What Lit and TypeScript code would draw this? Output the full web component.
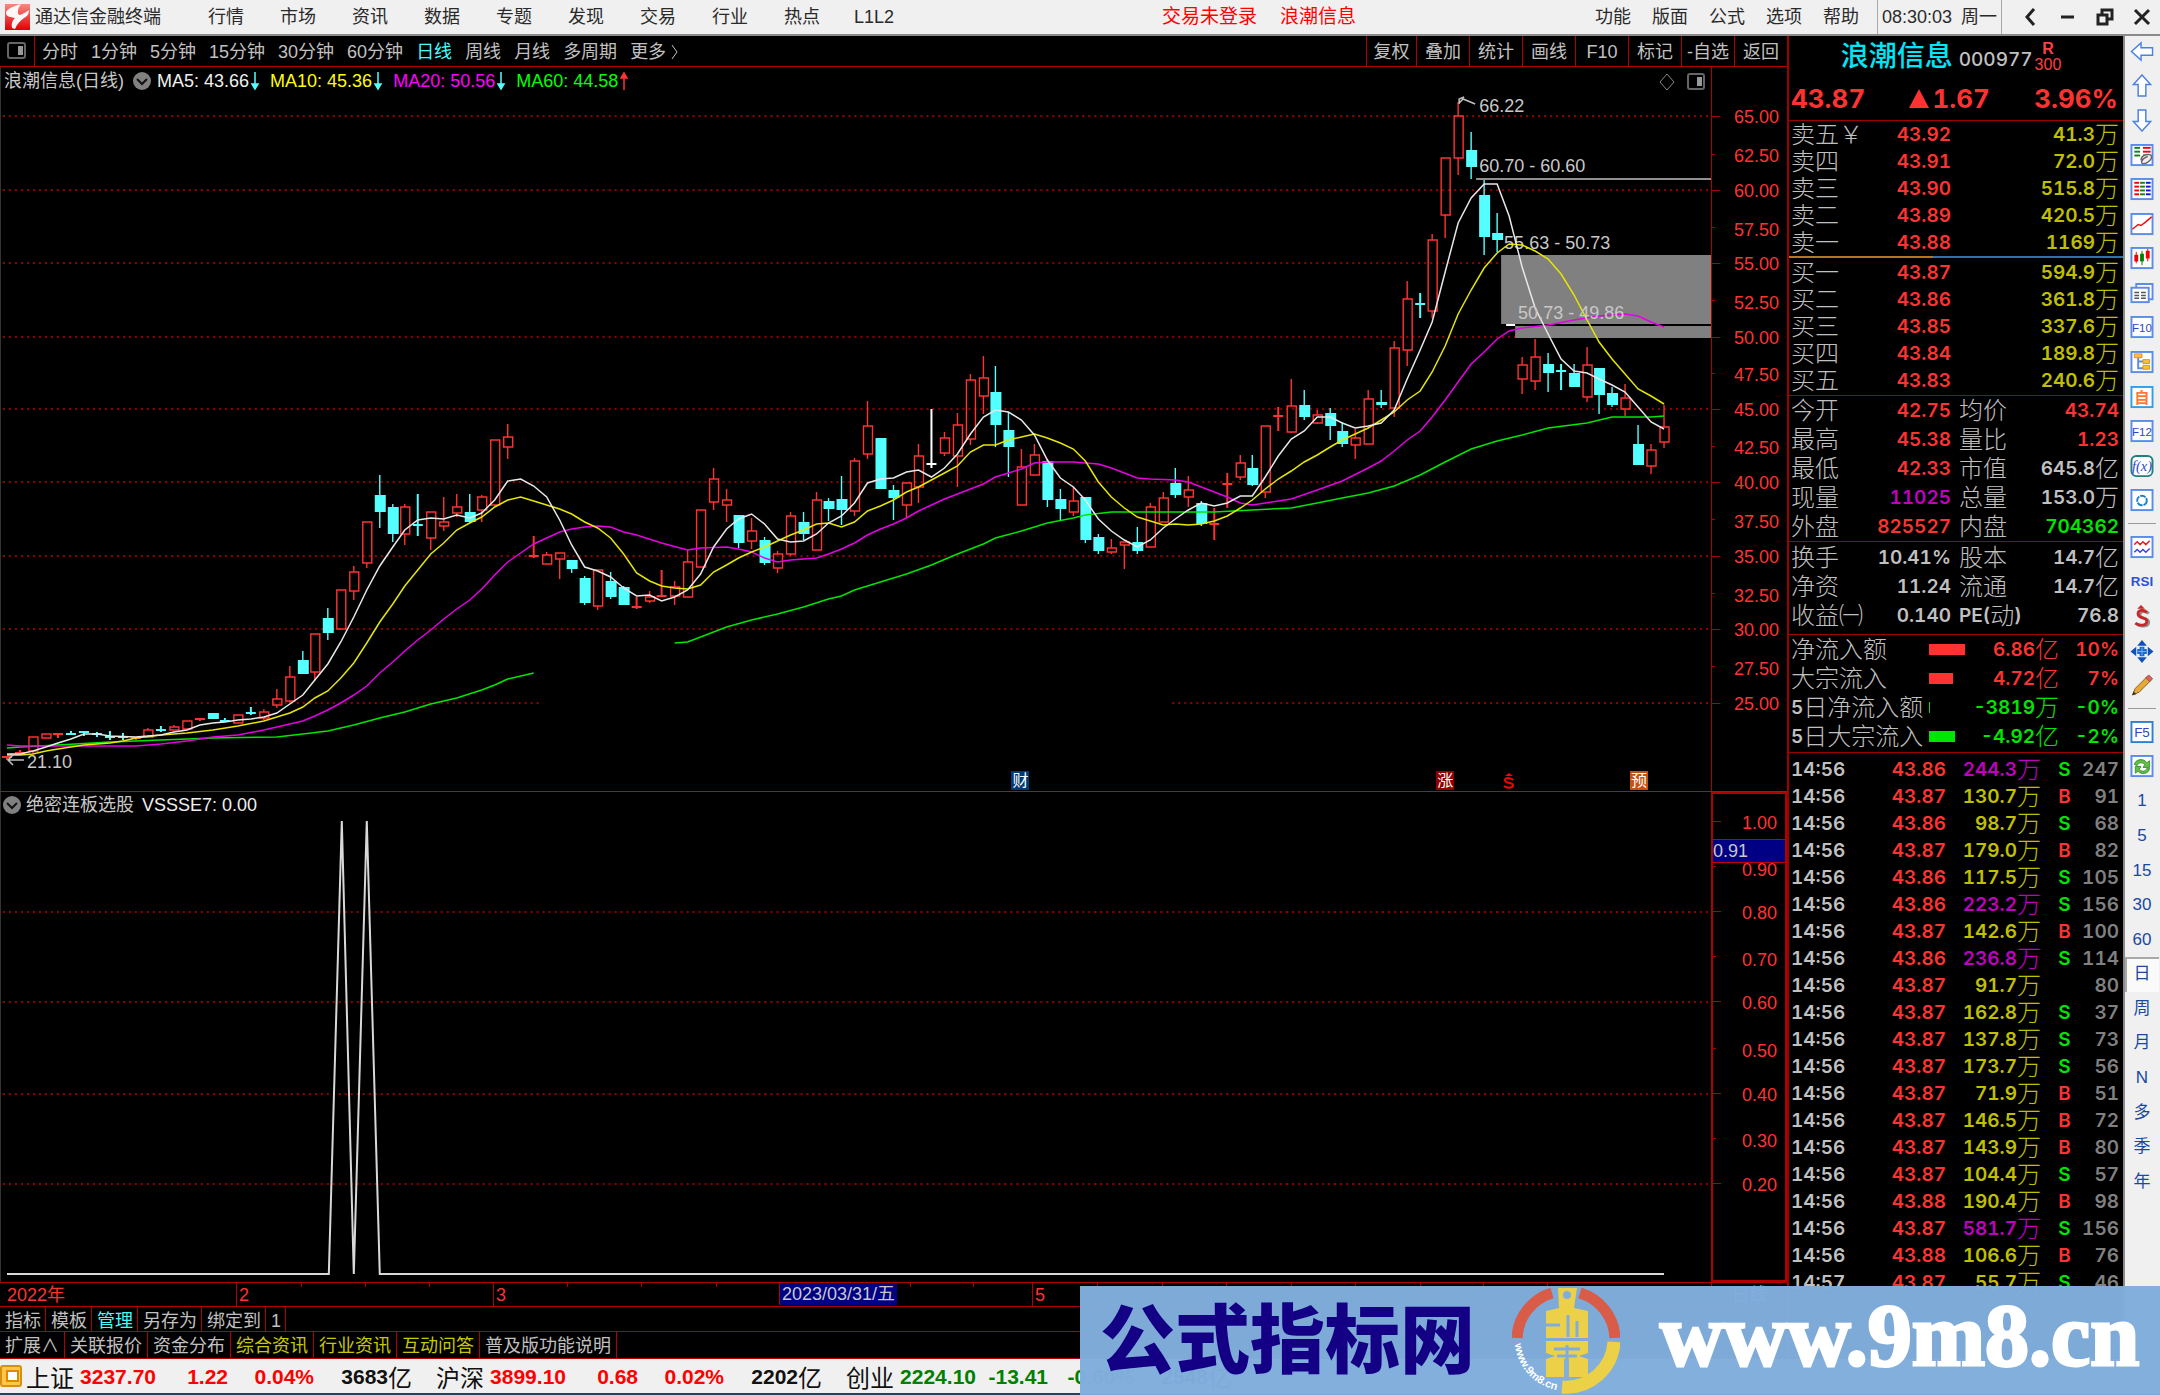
import { LitElement, html, svg, css, nothing } from "lit";
import { customElement, property } from "lit/decorators.js";

type Candle = [number, number, number, number, number, string];
type Point = [number, number];

const STEP = 1285;
const xAt = (i: number) => 6 + Math.round((i * STEP) / 100);

/* index, high, body top, body bottom, low, kind (u = up, d = down, w = flat) */
const CANDLES: Candle[] = [
  [0, 756, 757, 758, 760, "u"], [1, 750, 753, 754, 755, "u"], [2, 737, 737, 751, 754, "u"],
  [3, 734, 734, 738, 738, "u"], [4, 734, 734, 735, 738, "u"], [5, 731, 734, 735, 735, "d"],
  [6, 732, 732, 733, 736, "d"], [7, 732, 734, 735, 737, "d"], [8, 731, 737, 738, 740, "d"],
  [9, 733, 737, 739, 740, "d"], [10, 738, 738, 740, 740, "u"], [11, 728, 730, 737, 737, "u"],
  [12, 726, 730, 731, 732, "d"], [13, 725, 727, 730, 730, "u"], [14, 721, 721, 729, 729, "u"],
  [15, 718, 719, 721, 721, "u"], [16, 713, 713, 719, 719, "d"], [17, 718, 721, 722, 722, "d"],
  [18, 715, 715, 723, 723, "u"], [19, 707, 713, 715, 715, "d"], [20, 709, 712, 718, 720, "u"],
  [21, 689, 699, 705, 708, "u"], [22, 666, 677, 701, 703, "u"], [23, 651, 660, 674, 674, "d"],
  [24, 634, 634, 672, 681, "u"], [25, 608, 618, 633, 640, "d"], [26, 590, 590, 629, 629, "u"],
  [27, 566, 572, 591, 600, "u"], [28, 522, 522, 563, 568, "u"], [29, 475, 495, 512, 528, "d"],
  [30, 504, 507, 534, 542, "d"], [31, 504, 507, 534, 545, "u"], [32, 494, 525, 526, 536, "d"],
  [33, 512, 512, 538, 550, "u"], [34, 497, 522, 526, 531, "u"], [35, 494, 507, 513, 517, "u"],
  [36, 494, 512, 522, 523, "d"], [37, 495, 497, 510, 522, "u"], [38, 440, 440, 505, 506, "u"],
  [39, 424, 437, 447, 459, "u"], [41, 536, 556, 557, 558, "u"], [42, 552, 555, 564, 564, "u"],
  [43, 553, 553, 559, 579, "u"], [44, 560, 560, 569, 573, "d"], [45, 576, 578, 603, 605, "d"],
  [46, 570, 570, 606, 610, "u"], [47, 572, 581, 597, 599, "d"], [48, 586, 587, 605, 605, "d"],
  [49, 597, 607, 608, 609, "u"], [50, 591, 597, 601, 603, "u"], [51, 570, 596, 597, 597, "u"],
  [52, 581, 587, 596, 605, "u"], [53, 550, 562, 597, 597, "u"], [54, 510, 510, 567, 567, "u"],
  [55, 468, 479, 502, 510, "u"], [56, 489, 500, 505, 522, "u"], [57, 515, 515, 543, 548, "d"],
  [58, 518, 531, 541, 549, "u"], [59, 537, 540, 563, 565, "d"], [60, 551, 554, 568, 573, "u"],
  [61, 512, 516, 554, 556, "u"], [62, 512, 522, 534, 540, "d"], [63, 492, 500, 550, 550, "u"],
  [64, 498, 501, 509, 521, "d"], [65, 476, 499, 510, 525, "d"], [66, 458, 461, 511, 516, "u"],
  [67, 401, 426, 454, 459, "u"], [68, 438, 438, 489, 489, "d"], [69, 485, 490, 498, 520, "d"],
  [70, 482, 483, 505, 518, "u"], [71, 444, 456, 487, 503, "u"], [72, 409, 464, 465, 468, "w"],
  [73, 432, 438, 453, 456, "u"], [74, 413, 425, 456, 487, "u"], [75, 374, 380, 439, 445, "u"],
  [76, 356, 378, 396, 414, "u"], [77, 366, 392, 425, 447, "d"], [78, 412, 430, 447, 477, "d"],
  [79, 449, 467, 505, 505, "u"], [80, 444, 455, 475, 475, "u"], [81, 459, 461, 500, 507, "d"],
  [82, 489, 499, 509, 520, "d"], [83, 487, 501, 512, 516, "u"], [84, 497, 497, 540, 543, "d"],
  [85, 534, 537, 551, 554, "d"], [86, 539, 548, 552, 554, "u"], [87, 542, 542, 545, 569, "u"],
  [88, 527, 542, 551, 554, "d"], [89, 503, 507, 547, 547, "u"], [90, 492, 498, 522, 522, "u"],
  [91, 468, 483, 495, 498, "d"], [92, 476, 490, 497, 507, "u"], [93, 501, 503, 524, 526, "d"],
  [94, 508, 524, 525, 540, "u"], [95, 473, 484, 485, 508, "u"], [96, 455, 463, 477, 480, "u"],
  [97, 455, 468, 485, 486, "d"], [98, 426, 426, 492, 498, "u"], [99, 407, 416, 417, 431, "u"],
  [100, 379, 406, 432, 433, "u"], [101, 390, 405, 417, 420, "d"], [102, 410, 415, 423, 424, "u"],
  [103, 408, 413, 426, 440, "d"], [104, 422, 431, 444, 447, "d"], [105, 429, 438, 445, 459, "u"],
  [106, 390, 399, 444, 444, "u"], [107, 390, 402, 405, 408, "d"], [108, 341, 348, 408, 417, "u"],
  [109, 281, 299, 350, 366, "u"], [110, 293, 304, 306, 318, "d"], [111, 234, 240, 311, 318, "u"],
  [112, 158, 158, 215, 238, "u"], [113, 102, 116, 158, 175, "u"], [114, 132, 150, 167, 179, "d"],
  [115, 180, 195, 237, 255, "d"], [116, 213, 233, 240, 252, "d"], [118, 357, 365, 379, 394, "u"],
  [119, 339, 357, 381, 390, "u"], [120, 353, 364, 373, 392, "d"], [121, 364, 371, 373, 390, "d"],
  [122, 364, 373, 387, 387, "d"], [123, 347, 365, 397, 402, "u"], [124, 368, 368, 395, 414, "d"],
  [125, 387, 393, 405, 407, "d"], [126, 384, 398, 409, 416, "u"], [127, 425, 444, 465, 465, "d"],
  [128, 444, 450, 466, 474, "u"], [129, 405, 427, 442, 448, "u"],
];

const MA5: Point[] = [
  [0, 754], [1, 754], [2, 751], [3, 747], [4, 743], [5, 739], [6, 734], [7, 734], [8, 736], [10, 737], [11, 736], [12, 735], [13, 732],
  [14, 730], [15, 725], [16, 723], [17, 722], [18, 720], [19, 719], [20, 717], [21, 713], [22, 704], [23, 695], [24, 680], [25, 664],
  [26, 642], [27, 617], [28, 590], [29, 566], [30, 547], [31, 530], [32, 520], [33, 518], [34, 519], [35, 515], [36, 518], [37, 513],
  [38, 500], [39, 481], [40, 479], [41, 486], [42, 497], [43, 520], [44, 545], [45, 567], [46, 571], [47, 577], [48, 588], [49, 596],
  [50, 595], [51, 601], [52, 597], [53, 590], [54, 574], [55, 547], [56, 529], [57, 519], [58, 514], [59, 524], [60, 539], [61, 542],
  [62, 541], [63, 534], [64, 523], [65, 516], [66, 503], [67, 483], [68, 479], [69, 478], [70, 472], [71, 470], [72, 477], [73, 468],
  [74, 454], [75, 434], [76, 417], [77, 410], [78, 412], [79, 420], [80, 435], [81, 460], [82, 478], [83, 487], [84, 500], [85, 519],
  [86, 531], [87, 540], [88, 547], [89, 540], [90, 528], [91, 519], [92, 510], [93, 503], [94, 506], [95, 503], [96, 496], [97, 496],
  [98, 477], [99, 456], [100, 439], [101, 431], [102, 417], [103, 417], [104, 423], [105, 428], [106, 426], [107, 423], [108, 410],
  [109, 379], [110, 350], [111, 322], [112, 272], [113, 223], [114, 198], [115, 184], [116, 184], [117, 216], [118, 267], [119, 308],
  [120, 334], [121, 359], [122, 371], [123, 373], [124, 379], [125, 385], [126, 392], [127, 407], [128, 422], [129, 429],
];
const MA10: Point[] = [
  [0, 755], [1, 755], [2, 754], [3, 751], [4, 749], [5, 747], [6, 745], [8, 743], [9, 741], [10, 738], [12, 735], [14, 733], [16, 730],
  [18, 726], [20, 721], [22, 713], [23, 707], [24, 698], [25, 691], [26, 678], [27, 663], [28, 643], [29, 622], [30, 604], [31, 586],
  [32, 570], [33, 554], [34, 543], [35, 530], [36, 523], [37, 517], [38, 507], [39, 500], [40, 497], [41, 501], [42, 505], [43, 509],
  [44, 514], [45, 522], [46, 528], [47, 538], [48, 554], [49, 573], [50, 581], [51, 586], [52, 588], [53, 589], [54, 585], [55, 572],
  [56, 565], [57, 558], [58, 552], [59, 547], [60, 541], [61, 535], [62, 530], [63, 524], [64, 523], [65, 527], [66, 522], [67, 511],
  [68, 506], [69, 500], [70, 492], [71, 487], [72, 480], [73, 473], [74, 466], [75, 452], [76, 445], [77, 445], [78, 440], [79, 437],
  [80, 434], [81, 438], [82, 443], [83, 449], [84, 461], [85, 482], [86, 497], [87, 508], [88, 517], [89, 521], [90, 525], [91, 524],
  [92, 525], [93, 524], [94, 521], [95, 516], [96, 508], [97, 500], [98, 489], [99, 479], [100, 471], [101, 462], [102, 455],
  [103, 447], [104, 440], [105, 434], [106, 428], [107, 420], [108, 412], [109, 400], [110, 391], [111, 372], [112, 346], [113, 314],
  [114, 290], [115, 268], [116, 253], [117, 244], [118, 245], [119, 251], [120, 259], [121, 274], [122, 295], [123, 320], [124, 342],
  [125, 359], [126, 374], [127, 389], [128, 396], [129, 404],
];
const MA20: Point[] = [
  [0, 745], [1, 746], [10, 746], [12, 744], [14, 741], [16, 737], [18, 735], [20, 730], [21, 727], [22, 724], [23, 721], [24, 716],
  [25, 710], [26, 703], [27, 695], [28, 686], [29, 673], [30, 662], [31, 651], [32, 640], [33, 630], [34, 619], [35, 609], [36, 600],
  [37, 589], [38, 575], [39, 562], [40, 553], [41, 544], [42, 538], [43, 532], [44, 529], [45, 527], [46, 526], [47, 527], [48, 532],
  [49, 535], [51, 543], [53, 550], [54, 548], [56, 547], [57, 549], [58, 552], [59, 558], [60, 562], [61, 560], [63, 558], [64, 554],
  [65, 549], [66, 543], [67, 535], [68, 529], [69, 524], [70, 518], [71, 511], [72, 505], [73, 499], [74, 494], [75, 489], [76, 484],
  [77, 477], [78, 473], [79, 469], [80, 463], [81, 462], [83, 462], [85, 464], [86, 468], [87, 473], [88, 478], [89, 479], [91, 480],
  [92, 482], [93, 487], [94, 492], [95, 497], [96, 503], [97, 505], [99, 501], [100, 499], [102, 490], [104, 481], [106, 468],
  [107, 461], [108, 451], [109, 440], [110, 431], [111, 417], [112, 400], [113, 382], [114, 364], [115, 352], [116, 339], [117, 331],
  [118, 328], [120, 325], [122, 320], [124, 316], [126, 314], [127, 316], [128, 322], [129, 327],
];
const MA60_A: Point[] = [
  [0, 748], [1, 747], [4, 745], [8, 742], [12, 740], [16, 738], [21, 737], [23, 734], [25, 731], [27, 725], [29, 718], [31, 712],
  [33, 704], [35, 698], [37, 690], [38, 685], [39, 679], [41, 673],
];
const MA60_B: Point[] = [
  [52, 643], [53, 642], [54, 637], [56, 627], [58, 620], [60, 614], [62, 607], [64, 599], [65, 596], [66, 590], [68, 582], [70, 574],
  [72, 565], [74, 554], [76, 544], [77, 538], [79, 531], [81, 523], [83, 518], [84, 515], [86, 512], [94, 512], [97, 510], [100, 508],
  [102, 503], [104, 498], [106, 493], [108, 486], [110, 475], [112, 462], [114, 449], [116, 441], [118, 435], [120, 428], [123, 423],
  [125, 417], [128, 417], [129, 416],
];

const toPoints = (pts: Point[]) => pts.map(([i, y]) => `${xAt(i)},${y}`).join(" ");

const SHARED = css`
  button, a { font: inherit; color: inherit; background: none; border: 0; padding: 0; margin: 0; text-decoration: none; cursor: pointer; white-space: nowrap; }
  svg { display: block; }
`;

/* CJK runs are set larger than the figures beside them. */
const mixed = (text: string) =>
  text.split(/([\u3000-\u9fff\uffe5]+)/).filter(Boolean).map((part) =>
    /[\u3000-\u9fff\uffe5]/.test(part) ? html`<span class="cjk">${part}</span>` : html`<span>${part}</span>`);

@customElement("menu-bar")
export class MenuBar extends LitElement {
  static styles = [SHARED, css`
    :host { display: flex; align-items: center; height: 34px; background: #f0f0f0; border-bottom: 2px solid #8a8a8a; color: #2a2a2a; font-size: 18px; line-height: 24px; }
    .logo { width: 25px; height: 26px; margin: 0 5px; }
    .title { width: 155px; }
    .items { display: flex; flex: 1; }
    .items button { width: 72px; }
    .alerts { display: flex; gap: 23px; margin-right: 239px; color: #f00; font-size: 19px; }
    .right { display: flex; gap: 21px; margin-right: 18px; }
    .clock { display: flex; gap: 9px; align-items: center; height: 34px; padding: 0 4px; border-left: 1px solid #a8a8a8; border-right: 1px solid #a8a8a8; margin-right: 10px; }
    .win { display: flex; }
    .win button { width: 37px; display: grid; place-items: center; }
  `];
  render() {
    return html`
      <svg class="logo" viewBox="0 0 25 26"><defs><linearGradient id="lg" x2="0" y2="1"><stop stop-color="#f58a80"/><stop offset="1" stop-color="#e00008"/></linearGradient></defs>
        <rect width="25" height="26" fill="url(#lg)"/><path d="M16 0C9 2 1 5 1 9c0 4 5 4 9 5-3 3-4 6-3 10l3 1c2-5 5-8 9-11 4-2 5-5 5-8-3 2-6 4-9 5-3 0-3-6 1-11Z" fill="#fff" opacity=".95"/></svg>
      <span class="title">通达信金融终端</span>
      <nav class="items">${["行情", "市场", "资讯", "数据", "专题", "发现", "交易", "行业", "热点", "L1L2"].map((t) => html`<button>${t}</button>`)}</nav>
      <div class="alerts"><button>交易未登录</button><button>浪潮信息</button></div>
      <nav class="right">${["功能", "版面", "公式", "选项", "帮助"].map((t) => html`<button>${t}</button>`)}</nav>
      <div class="clock"><span>08:30:03</span><span>周一</span></div>
      <div class="win">
        <button aria-label="上一页"><svg width="18" height="18" fill="none" stroke="#222" stroke-width="3"><path d="M12 1 5 9l7 8"/></svg></button>
        <button aria-label="最小化"><svg width="18" height="18" stroke="#222" stroke-width="3"><path d="M2 9h13"/></svg></button>
        <button aria-label="还原"><svg width="18" height="18" fill="none" stroke="#222" stroke-width="3"><path d="M2 7h9v9H2ZM6 6V2h10v9h-4"/></svg></button>
        <button aria-label="关闭"><svg width="18" height="18" fill="none" stroke="#222" stroke-width="3"><path d="m2 2 14 14M16 2 2 16"/></svg></button>
      </div>`;
  }
}

@customElement("period-bar")
export class PeriodBar extends LitElement {
  static styles = [SHARED, css`
    :host { display: flex; align-items: stretch; height: 30px; border-bottom: 1px solid #b00000; color: #c0c0c0; font-size: 18px; line-height: 26px; }
    .panel { width: 35px; border-right: 1px solid #b00000; display: grid; place-items: center; box-sizing: border-box; }
    .periods { display: flex; gap: 13px; align-items: center; flex: 1; padding: 2px 0 0 7px; }
    .on { color: #4ff; }
    .more { display: flex; gap: 5px; align-items: center; }
    .tools { display: grid; grid-template-columns: 50px repeat(7, 1fr); width: 421px; }
    .tools button { border-left: 1px solid #b00000; padding-top: 2px; }
  `];
  render() {
    const p = ["分时", "1分钟", "5分钟", "15分钟", "30分钟", "60分钟", "日线", "周线", "月线", "多周期"];
    return html`
      <button class="panel" aria-label="侧栏"><svg width="20" height="18"><rect x="1" y="1" width="17" height="15" rx="2" fill="none" stroke="#666" stroke-width="2"/><rect x="11" y="4" width="5" height="9" fill="#999"/></svg></button>
      <nav class="periods">${p.map((t) => html`<button class=${t === "日线" ? "on" : ""}>${t}</button>`)}
        <button class="more">更多<svg width="8" height="16" fill="none" stroke="#c0c0c0"><path d="m1 1 5 7-5 7"/></svg></button></nav>
      <div class="tools">${["复权", "叠加", "统计", "画线", "F10", "标记", "-自选", "返回"].map((t) => html`<button>${t}</button>`)}</div>`;
  }
}

const CHART = css`
  :host { display: grid; grid-template-columns: minmax(0, 1fr) 76px; min-height: 0; font-size: 18px; line-height: 22px; color: #c8c8c8; }
  .plot { position: relative; min-height: 0; border-left: 1px solid #333; box-sizing: border-box; }
  .canvas { position: absolute; inset: 0; width: 100%; height: 100%; }
  .axis { position: relative; color: #ff3232; }
  .mark { position: absolute; left: 0; right: 8px; height: 22px; margin-top: -11px; text-align: right; }
  .tick { position: absolute; left: 0; height: 1px; width: 8px; background: #b00000; }
  .minor { width: 3px; }
  .legend { position: absolute; left: 3px; top: 3px; display: flex; align-items: center; white-space: nowrap; }
  .chev { width: 18px; height: 18px; }
  .grid { stroke: #900000; stroke-width: 2; stroke-dasharray: 2 4; }
`;

const chevron = html`<svg class="chev" viewBox="0 0 18 18"><circle cx="9" cy="9" r="9" fill="#808080"/><path d="m4 7 5 5 5-5" fill="none" stroke="#111" stroke-width="2"/></svg>`;

@customElement("price-chart")
export class PriceChart extends LitElement {
  static styles = [SHARED, CHART, css`
    :host { border-bottom: 1px solid #d00000; }
    .axis { border-left: 1px solid #b00000; }
    .legend .chev { margin: 0 6px 0 9px; }
    .ma { display: flex; align-items: center; gap: 1px; margin-right: 10px; }
    .m5 { color: #f0f0f0; } .m10 { color: #ff0; } .m20 { color: #f0f; } .m60 { color: #0f0; }
    .note { position: absolute; height: 22px; margin-top: -11px; white-space: nowrap; }
    .flag { position: absolute; bottom: 1px; width: 18px; height: 19px; line-height: 19px; font-size: 16px; text-align: center; color: #fff; margin-left: -9px; }
    .b { background: #003a72; } .r { background: #900000; } .o { background: #c8500c; }
    .corner { position: absolute; right: 6px; top: 6px; display: flex; gap: 12px; align-items: center; }
  `];
  private pos(x: number, y: number) {
    return `left:${(x / 1711) * 100}%;top:${((y - 67) / 724) * 100}%`;
  }
  private candle([i, hi, top, bot, lo, kind]: Candle) {
    const x = xAt(i);
    const color = kind === "u" ? "#ff3232" : kind === "d" ? "#54ffff" : "#ffffff";
    if (bot - top <= 2) {
      return svg`<path d="M${x} ${hi}V${lo}M${x - 5} ${top}H${x + 5}" stroke=${color} stroke-width="2"/>`;
    }
    return kind === "u"
      ? svg`<path d="M${x} ${hi}V${top}M${x} ${bot}V${lo}M${x - 4} ${top}H${x + 5}V${bot}H${x - 4}Z" fill="none" stroke=${color} stroke-width="1.4"/>`
      : svg`<path d="M${x} ${hi}V${lo}" stroke=${color} stroke-width="1.4"/><rect x=${x - 5} y=${top} width="11" height=${bot - top} fill=${color}/>`;
  }
  render() {
    const rows: [string, number, number][] = [
      ["65.00", 116, 117], ["62.50", 154, 156], ["60.00", 190, 191], ["57.50", 227, 230], ["55.00", 263, 264], ["52.50", 300, 303],
      ["50.00", 337, 338], ["47.50", 373, 375], ["45.00", 409, 410], ["42.50", 446, 448], ["40.00", 482, 483], ["37.50", 519, 522],
      ["35.00", 556, 557], ["32.50", 593, 596], ["30.00", 629, 630], ["27.50", 666, 669], ["25.00", 703, 704]];
    const ma = (cls: string, label: string, up = false) => html`<span class="ma ${cls}">${label}
      <svg width="10" height="20" viewBox="0 0 10 20">${up
        ? svg`<path d="M5 19V3M2 7l3-5 3 5Z" stroke="#ff3232" fill="#ff3232" stroke-width="1.5"/>`
        : svg`<path d="M5 1v15M2 13l3 5 3-5Z" stroke="#54ffff" fill="#54ffff" stroke-width="1.5"/>`}</svg></span>`;
    const note = (t: string, x: number, y: number) => html`<span class="note" style=${this.pos(x, y)}>${t}</span>`;
    const flag = (t: string, c: string, x: number) => html`<span class="flag ${c}" style="left:${(x / 1711) * 100}%">${t}</span>`;
    return html`
      <div class="plot">
        ${note("66.22", 1479, 106)}${note("60.70 - 60.60", 1479, 166)}${note("55.63 - 50.73", 1504, 243)}
        ${note("21.10", 26, 762)}
        <svg class="canvas" viewBox="0 67 1711 724" preserveAspectRatio="none">
          ${rows.filter((_, k) => k % 2 === 0 && k < 16).map(([, y]) => svg`<path class="grid" d="M2 ${y}H1711"/>`)}
          <path class="grid" d="M2 703H538M1172 703H1711"/>
          <path d="M1476 179H1711" stroke="#909090" stroke-width="2"/>
          <path d="M1501 255H1711V324H1501ZM1515 326H1711V338H1515Z" fill="#808080"/>
          <path d="M1506 325H1515" stroke="#fff" stroke-width="2"/>
          ${CANDLES.map((c) => this.candle(c))}
          <g fill="none" stroke-width="1.5">
            <polyline points=${toPoints(MA60_A)} stroke="#00e600"/>
            <polyline points=${toPoints(MA60_B)} stroke="#00e600"/>
            <polyline points=${toPoints(MA20)} stroke="#e600e6"/>
            <polyline points=${toPoints(MA10)} stroke="#e6e600"/>
            <polyline points=${toPoints(MA5)} stroke="#e8e8e8"/>
            <path d="M23 760H7M12 755l-5 5 5 5M1475 104l-12-5-4 4M1459 104v-5l5-2" stroke="#c0c0c0"/>
          </g>
        </svg>
        ${note("50.73 - 49.86", 1518, 313)}
        <div class="legend"><span>浪潮信息(日线)</span>${chevron}
          ${ma("m5", "MA5: 43.66")}${ma("m10", "MA10: 45.36")}${ma("m20", "MA20: 50.56")}${ma("m60", "MA60: 44.58", true)}</div>
        <div class="corner"><svg width="16" height="18" fill="none" stroke="#888"><path d="m8 1 7 8-7 8-7-8Z"/></svg>
          <svg width="18" height="18"><rect x="1" y="1" width="16" height="15" rx="2" fill="none" stroke="#666" stroke-width="2"/><rect x="10" y="4" width="5" height="9" fill="#999"/></svg></div>
        ${flag("财", "b", 1020)}${flag("涨", "r", 1445)}${flag("预", "o", 1639)}
        <svg class="flag" style="left:${(1509 / 1711) * 100}%" viewBox="0 0 18 19" fill="none" stroke="#f00" stroke-width="2"><path d="M5 5l4-3 4 3Z" fill="#f00" stroke="none"/><path d="M13 9c-1-2-8-3-8 0 0 4 8 2 8 5 0 4-7 3-9 1"/></svg>
      </div>
      <div class="axis">${rows.map(([t, y, ly], k) => html`
        <span class="tick ${k % 2 ? "minor" : ""}" style="top:${((y - 67) / 724) * 100}%"></span>
        <span class="mark" style="top:${((ly - 67) / 724) * 100}%">${t}</span>`)}</div>`;
  }
}

@customElement("signal-chart")
export class SignalChart extends LitElement {
  static styles = [SHARED, CHART, css`
    :host { border-bottom: 1px solid #b00000; }
    .axis { border: 2px solid #b00000; box-sizing: border-box; }
    .legend { top: 2px; left: 2px; }
    .legend .chev { margin-right: 5px; }
    .val { color: #f0f0f0; margin-left: 8px; }
    .cursor { position: absolute; left: 0; right: 0; height: 22px; margin-top: -12px; border: solid #c00000; border-width: 1px 0; background: #000084; color: #c8c8c8; }
  `];
  render() {
    const rows: [string, number, number][] = [
      ["1.00", 821, 823], ["0.90", 866, 870], ["0.80", 911, 913], ["0.70", 956, 960], ["0.60", 1001, 1003],
      ["0.50", 1048, 1051], ["0.40", 1093, 1095], ["0.30", 1138, 1141], ["0.20", 1183, 1185]];
    const pct = (y: number) => `top:${((y - 794) / 486) * 100}%`;
    return html`
      <div class="plot">
        <svg class="canvas" viewBox="0 792 1711 490" preserveAspectRatio="none">
          ${[912, 1002, 1094, 1184].map((y) => svg`<path class="grid" d="M2 ${y}H1711"/>`)}
          <path d="M6 1274H328L341 821 353 1274 366 821 379 1274H1664" fill="none" stroke="#d8d8d8" stroke-width="2"/>
        </svg>
        <div class="legend">${chevron}<span>绝密连板选股</span><span class="val">VSSSE7: 0.00</span></div>
      </div>
      <div class="axis">
        ${rows.map(([t, y, ly], k) => html`<span class="tick ${k % 2 ? "minor" : ""}" style=${pct(y)}></span><span class="mark" style=${pct(ly)}>${t}</span>`)}
        <span class="cursor" style=${pct(851)}>0.91</span>
      </div>`;
  }
}

@customElement("date-axis")
export class DateAxis extends LitElement {
  static styles = css`
    :host { display: grid; grid-template-columns: minmax(0, 1fr) 76px; height: 23px; border-bottom: 1px solid #b00000; color: #ff3232; font-size: 18px; line-height: 25px; }
    .scale { position: relative; }
    .t { position: absolute; top: 0; height: 4px; width: 1px; background: #b00000; }
    .d { position: absolute; top: 0; height: 23px; padding-left: 2px; border-left: 1px solid #b00000; white-space: nowrap; }
    .first { border-color: transparent; }
    .cur { background: #000084; color: #c8c8c8; padding: 0 2px; line-height: 23px; height: 22px; }
    .unit { border-left: 1px solid #b00000; text-align: center; color: #c0c0c0; }
  `;
  render() {
    const at = (x: number) => `left:${(x / 1711) * 100}%`;
    return html`<div class="scale">
        ${[301, 365, 429, 567, 641, 716, 910, 973, 1097, 1162, 1226, 1291, 1355, 1420, 1483, 1547].map((x) => html`<span class="t" style=${at(x)}></span>`)}
        <span class="d first" style=${at(4)}>2022年</span><span class="d" style=${at(236)}>2</span><span class="d" style=${at(493)}>3</span>
        <span class="d cur" style=${at(779)}>2023/03/31/五</span><span class="d" style=${at(1032)}>5</span>
      </div><div class="unit">日线</div>`;
  }
}

@customElement("tab-strip")
export class TabStrip extends LitElement {
  static styles = [SHARED, css`
    :host { display: flex; border-bottom: 1px solid #b00000; color: #c0c0c0; font-size: 18px; line-height: 24px; }
    button { border-right: 1px solid #b00000; padding: 2px 5px 0; }
    :host(.short) button { padding: 2px 4px 0 5px; }
    .cyan { color: #4ff; } .gold { color: #c8c800; }
  `];
  @property({ attribute: false }) tabs: [string, string?][] = [];
  render() {
    return this.tabs.map(([t, c]) => html`<button class=${c ?? ""}>${t}</button>`);
  }
}

@customElement("quote-panel")
export class QuotePanel extends LitElement {
  static styles = css`
    :host { display: block; min-height: 0; overflow: hidden; border-left: 2px solid #a00000; color: #c0c0c0; font: 600 19px/27px Inter, "Noto Sans CJK SC", sans-serif; font-variant-numeric: tabular-nums; }
    .cjk { display: inline-block; font: 300 24px/24px "Noto Sans CJK SC", sans-serif; vertical-align: -2px; }
    .head { display: flex; align-items: baseline; justify-content: center; gap: 6px; height: 40px; padding-right: 10px; }
    h1 { margin: 0; font: 500 28px/37px "Noto Sans CJK SC", sans-serif; color: #00e6f6; }
    .code { font-weight: 500; }
    .badge { display: grid; justify-items: center; align-self: center; font: 16px/16px "Liberation Sans", sans-serif; color: #ff4040; margin-left: -4px; padding-top: 2px; }
    .price { display: flex; justify-content: space-between; align-items: center; height: 44px; padding: 0 5px 0 2px; font-size: 26px; font-weight: 700; color: #ff3232; }
    .tri { display: inline-block; width: 0; border: solid transparent; border-width: 0 10px 19px; border-bottom-color: #ff3232; margin-right: 3px; }
    section { border-top: 1px solid #a00000; padding: 0 4px 0 2px; }
    table { width: 100%; border-collapse: collapse; table-layout: fixed; }
    td, th { padding: 0; height: 27px; vertical-align: middle; text-align: right; white-space: nowrap; font-weight: inherit; }
    th, .l { text-align: left; }
    .w60 { width: 60px; } .w70 { width: 70px; } .w90 { width: 90px; } .w95 { width: 95px; }
    .split { height: 2px; background: linear-gradient(90deg, #b07820 43%, #3070b0 43%); }
    .buy { border: 0; padding-top: 1px; padding-bottom: 1px; }
    .info td, .info th { height: 29px; }
    .info .second { padding-left: 8px; }
    .i2 { padding-top: 1px; padding-bottom: 4px; } .i3 { padding-bottom: 1px; } .i4 { padding-top: 3px; }
    .red { color: #ff3232; } .green { color: #00e600; } .mag { color: #c000c0; } .yel { color: #c0c000; } .dim { color: #808080; }
    .bar { display: block; height: 11px; }
    .bar.red { background: #ff3232; } .bar.green { background: #00e600; }
    .side { text-align: center; padding-left: 8px; }
  `;
  render() {
    const sell = [["卖五￥", "43.92", "41.3万"], ["卖四", "43.91", "72.0万"], ["卖三", "43.90", "515.8万"], ["卖二", "43.89", "420.5万"], ["卖一", "43.88", "1169万"]];
    const buy = [["买一", "43.87", "594.9万"], ["买二", "43.86", "361.8万"], ["买三", "43.85", "337.6万"], ["买四", "43.84", "189.8万"], ["买五", "43.83", "240.6万"]];
    const book = (rows: string[][]) => html`<table>${rows.map(([a, b, c]) => html`<tr><th class="w70">${mixed(a)}</th><td class="red w90">${b}</td><td class="yel">${mixed(c)}</td></tr>`)}</table>`;
    const info1 = [["今开", "42.75", "red", "均价", "43.74", "red"], ["最高", "45.38", "red", "量比", "1.23", "red"], ["最低", "42.33", "red", "市值", "645.8亿", ""],
      ["现量", "11025", "mag", "总量", "153.0万", ""], ["外盘", "825527", "red", "内盘", "704362", "green"]];
    const info2 = [["换手", "10.41%", "", "股本", "14.7亿", ""], ["净资", "11.24", "", "流通", "14.7亿", ""], ["收益㈠", "0.140", "", "PE(动)", "76.8", ""]];
    const info = (rows: string[][]) => html`<table class="info">${rows.map(([a, b, c, d, e, f]) => html`<tr><th class="w70">${mixed(a)}</th><td class="w90 ${c}">${b}</td><th class="w70 second">${mixed(d)}</th><td class=${f}>${mixed(e)}</td></tr>`)}</table>`;
    const flow: [string, number, string, string, string][] = [["净流入额", 36, "6.86亿", "10%", "red"], ["大宗流入", 24, "4.72亿", "7%", "red"], ["5日净流入额", 1, "-3819万", "-0%", "green"], ["5日大宗流入", 26, "-4.92亿", "-2%", "green"]];
    const T = "14:56";
    const deals: [string, string, string, string, string][] = [
      [T, "43.86", "244.3", "S", "247"], [T, "43.87", "130.7", "B", "91"], [T, "43.86", "98.7", "S", "68"], [T, "43.87", "179.0", "B", "82"],
      [T, "43.86", "117.5", "S", "105"], [T, "43.86", "223.2", "S", "156"], [T, "43.87", "142.6", "B", "100"], [T, "43.86", "236.8", "S", "114"],
      [T, "43.87", "91.7", "", "80"], [T, "43.87", "162.8", "S", "37"], [T, "43.87", "137.8", "S", "73"], [T, "43.87", "173.7", "S", "56"],
      [T, "43.87", "71.9", "B", "51"], [T, "43.87", "146.5", "B", "72"], [T, "43.87", "143.9", "B", "80"], [T, "43.87", "104.4", "S", "57"],
      [T, "43.88", "190.4", "B", "98"], [T, "43.87", "581.7", "S", "156"], [T, "43.88", "106.6", "B", "76"], ["14:57", "43.87", "55.7", "S", "46"]];
    return html`
      <div class="head"><h1>浪潮信息</h1><span class="code">000977</span><span class="badge"><b>R</b><span>300</span></span></div>
      <div class="price"><span>43.87</span><span><i class="tri"></i>1.67</span><span>3.96%</span></div>
      <section>${book(sell)}</section>
      <div class="split"></div>
      <section class="buy">${book(buy)}</section>
      <section>${info(info1)}</section>
      <section class="i2">${info(info2)}</section>
      <section class="i3"><table class="info">
        <colgroup><col style="width:138px"><col style="width:36px"><col><col style="width:60px"></colgroup>
        ${flow.map(([a, w, v, p, c]) => html`<tr><th>${mixed(a)}</th><td><span class="bar ${c}" style="width:${w}px"></span></td><td class=${c}>${mixed(v)}</td><td class=${c}>${p}</td></tr>`)}</table></section>
      <section class="i4"><table>
        ${deals.map(([t, p, v, s, n]) => html`<tr><td class="l w60">${t}</td><td class="red w95">${p}</td><td class="${Number(v) > 200 ? "mag" : "yel"} w95">${v}<span class="cjk">万</span></td>
          <td class="side ${s === "S" ? "green" : "red"}">${s || nothing}</td><td class="dim">${n}</td></tr>`)}</table></section>`;
  }
}

const box = (inner: unknown, stroke = "#5a8ce8") => svg`<rect x="1" y="1" width="22" height="21" fill="#fff" stroke=${stroke} stroke-width="2"/>${inner}`;
const lines = (x: number, w: number, ys: number[], c: string) => ys.map((y) => svg`<path d="M${x} ${y}h${w}" stroke=${c} stroke-width="2"/>`);
const label = (t: string, size = 13) => svg`<text x="12" y="17" text-anchor="middle" font-size=${size} fill="#2848c8" font-family="Liberation Sans, sans-serif">${t}</text>`;
const arrow = (deg: number) => svg`<path transform="rotate(${deg} 12 12)" d="M1 12 11 3v5h12v8H11v5Z" fill="#fff" stroke="#4a80e0" stroke-width="1.5"/>`;
const ICONS_A: [string, unknown][] = [
  ["后退", arrow(0)], ["上移", arrow(90)], ["下移", arrow(-90)],
  ["自选报价", box([lines(4, 6, [4, 8, 12], "#108010"), lines(13, 8, [4, 8, 12], "#f00000"), svg`<path d="M11 17c0-6 10-8 11-4 0 5-8 9-10 7-2-3 3-6 6-7" fill="#eee" stroke="#666" stroke-width="1.5"/>`])],
  ["列表", box([lines(4, 5, [5, 9, 13, 17], "#f00000"), lines(10, 5, [5, 9, 13, 17], "#108010"), lines(16, 5, [5, 9, 13, 17], "#1010e0")])],
  ["走势", box(svg`<path d="m2 17 6-5 3 1 4-3 7-6" fill="none" stroke="#e81010" stroke-width="1.5"/>`)],
  ["K线", box(svg`<path d="M6 5v12M18 2v13" stroke="#f00000"/><path d="M12 4v15" stroke="#007000"/><path d="M4 8h4v7H4ZM16 4h4v8h-4Z" fill="#f00000"/><path d="M10 7h4v8h-4Z" fill="#008000"/>`)],
  ["窗口", svg`<path d="M6 6V2h17v16h-4" fill="#fff" stroke="#5a8ce8" stroke-width="2"/><rect x="1" y="6" width="18" height="15" fill="#fff" stroke="#5a8ce8" stroke-width="2"/><path d="M4 11h5m2 0h5M4 14h5m2 0h5M4 17h5m2 0h5" stroke="#555" stroke-width="1.5"/>`],
  ["F10", box(label("F10", 12))],
  ["结构", box(svg`<path d="M8 6v12h6M8 11h6" fill="none" stroke="#5a8ce8" stroke-width="2"/><path d="M4 3h8v4H4ZM13 9h7v4h-7ZM13 15h7v4h-7Z" fill="#ffc040" stroke="#e09010"/>`)],
  ["自", box(svg`<text x="12" y="18" text-anchor="middle" font-size="16" font-weight="700" fill="#ff7838" font-family="Noto Sans CJK SC, sans-serif">自</text>`, "#30a0e8")],
  ["F12", box(label("F12", 12))],
  ["公式", svg`<rect x="1" y="1" width="22" height="21" rx="5" fill="#fff" stroke="#208080" stroke-width="2"/><text x="12" y="17" text-anchor="middle" font-size="15" font-style="italic" fill="#2848c8" font-family="Liberation Serif, serif">f(x)</text>`],
  ["圈", box(svg`<circle cx="12" cy="12" r="5" fill="none" stroke="#2080d0" stroke-width="2" stroke-dasharray="6 1"/>`)],
];
const ICONS_B: [string, unknown][] = [
  ["波形", box(svg`<path d="m4 9 3-3 3 3 3-3 3 3 4-4" fill="none" stroke="#e82020" stroke-width="1.5"/><path d="m4 17 3-3 3 3 3-3 3 3 4-4" fill="none" stroke="#4040e0" stroke-width="1.5"/>`)],
  ["RSI", svg`<text x="12" y="17" text-anchor="middle" font-size="14" font-weight="700" fill="#3050d8" font-family="Liberation Sans, sans-serif">RSI</text>`],
  ["资金", svg`<path d="M19 9c-3-4-10-2-9 2s9 2 9 7-9 5-12 2" fill="none" stroke="#909090" stroke-width="3"/><path d="M17 8C14 4 7 5 8 10s9 2 9 7-8 5-12 2" fill="none" stroke="#c82828" stroke-width="3"/><path d="m7 4 4-4 4 4Z" fill="#c82828"/>`],
  ["移动", svg`<path d="m12 0 5 6H7ZM12 24l5-6H7ZM0 12l6-5v10ZM24 12l-6-5v10Z" fill="#1050b8"/><path d="M12 7v10M7 12h10" stroke="#1868d0" stroke-width="5"/><path d="M12 8v8M8 12h8" stroke="#80b0f0" stroke-width="1"/>`],
  ["画笔", svg`<path d="m2 22 3-7L17 3l4 4L9 19Z" fill="#e8a838" stroke="#806020"/><path d="m16 4 3-3 4 4-3 3Z" fill="#e06060" stroke="#905050"/><path d="m2 22 1-4 3 3Z" fill="#333"/>`],
];

@customElement("side-strip")
export class SideStrip extends LitElement {
  static styles = [SHARED, css`
    :host { display: flex; flex-direction: column; background: #f0f0f0; border-left: 2px solid #8a8a8a; color: #1848a0; font-size: 17px; line-height: 24px; padding-right: 1px; }
    .group { display: flex; flex-direction: column; height: 484px; }
    .first { margin-top: -2px; }
    .short { height: 173px; }
    .group button { flex: 1; display: grid; place-items: center; }
    hr { width: 28px; margin: 5px auto 6px; border: 0; border-top: 1px solid #999; }
    .on { background: #fafafa; box-shadow: inset 2px 2px 0 #a8a8a8; }
  `];
  render() {
    const icon = ([name, g]: [string, unknown]) => html`<button aria-label=${name}><svg width="24" height="23" viewBox="0 0 24 24">${g}</svg></button>`;
    return html`
      <div class="group first">${ICONS_A.map(icon)}</div><hr>
      <div class="group short">${ICONS_B.map(icon)}</div><hr>
      <div class="group">
        ${icon(["F5", box(label("F5", 14), "#3080d0")])}
        ${icon(["刷新", box(svg`<path d="M4 10c1-6 10-7 13-2l3-2v7h-7l2-3c-3-3-7-2-8 1ZM20 14c-1 6-9 7-12 3l-3 2v-7h6l-2 3c3 3 7 2 8-1Z" fill="#60c040" stroke="#308028" stroke-width=".8"/>`)])}
        ${["1", "5", "15", "30", "60", "日", "周", "月", "N", "多", "季", "年"].map((t) => html`<button class=${t === "日" ? "on" : ""}>${t}</button>`)}
      </div>`;
  }
}

@customElement("index-bar")
export class IndexBar extends LitElement {
  static styles = css`
    :host { display: flex; align-items: center; height: 34px; background: #f0f0f0; border-bottom: 2px solid #284058; color: #111; font: 700 21px/36px "Liberation Sans", "Noto Sans CJK SC", sans-serif; white-space: nowrap; }
    .icon { width: 22px; height: 22px; margin-right: 4px; flex: none; }
    .cjk { display: inline-block; font: 400 24px/36px "Noto Sans CJK SC", sans-serif; }
    .idx { display: grid; grid-template-columns: 52px 78px 72px 86px 98px; align-items: center; margin-right: 24px; padding-top: 1px; text-align: right; }
    .idx :first-child { text-align: left; }
    .vol { display: flex; justify-content: flex-end; }
    .up { color: #f00; } .down { color: #008000; }
  `;
  render() {
    const data = [["上证", "3237.70", "1.22", "0.04%", "3683", "up"], ["沪深", "3899.10", "0.68", "0.02%", "2202", "up"], ["创业", "2224.10", "-13.41", "-0.60%", "2548", "down"]];
    return html`<svg class="icon" viewBox="0 0 22 22"><rect x="1" y="1" width="20" height="20" rx="2" fill="#ffc848" stroke="#d89010" stroke-width="2"/><rect x="7" y="6" width="11" height="10" fill="#fff" stroke="#e08800" stroke-width="2"/></svg>
      ${data.map(([n, v, c, p, t, k]) => html`<div class="idx"><span class="cjk">${n}</span><span class=${k}>${v}</span><span class=${k}>${c}</span><span class=${k}>${p}</span><span class="vol"><span>${t}</span><span class="cjk">亿</span></span></div>`)}`;
  }
}

@customElement("site-banner")
export class SiteBanner extends LitElement {
  static styles = css`
    :host { display: flex; align-items: center; background: rgba(129, 173, 220, 0.98); white-space: nowrap; }
    .name { font: 900 75px/100px "Noto Sans CJK SC", sans-serif; color: #140084; margin-left: 20px; padding-bottom: 11px; }
    .coin { width: 108px; height: 108px; margin: 0 40px 0 37px; flex: none; }
    .url { font: 700 88px/100px "Liberation Serif", serif; color: #fff; -webkit-text-stroke: 3px #fff; padding-bottom: 10px; }
  `;
  render() {
    return html`<span class="name">公式指标网</span>
      <svg class="coin" viewBox="0 0 108 108">
        <path d="M5 51A49 49 0 0 1 40 6M68 6A49 49 0 0 1 103 51" fill="none" stroke="#d85c48" stroke-width="11"/>
        <path d="M102 55A48 48 0 0 1 50 100" fill="none" stroke="#ecd048" stroke-width="13"/>
        <path d="M46 1h19l-3 20 14 3v27H34V24l13-3ZM34 54h42v12l-9 3 9 3v18H57V72h-5v18H34V72l9-3-9-3Z" fill="#ecd048"/>
        <circle cx="55" cy="8" r="4" fill="#81addc"/>
        <path d="M56 28v22M65 34v16M34 38h14M42 62h26M45 69h20M55 58v14" stroke="#81addc" stroke-width="3"/>
        <path id="curve" d="M3 57A52 52 0 0 0 44 103" fill="none"/>
        <text font-family="Liberation Sans, sans-serif" font-weight="700" font-size="11" fill="#fff"><textPath href="#curve">www.9m8.cn</textPath></text>
      </svg>
      <span class="url">www.9m8.cn</span>`;
  }
}

@customElement("app-root")
export class AppRoot extends LitElement {
  static styles = css`
    :host { display: flex; flex-direction: column; position: relative; height: 100vh; overflow: hidden; background: #000; font-family: "Liberation Sans", "Noto Sans CJK SC", sans-serif; }
    .body { flex: 1; min-height: 0; display: grid; grid-template-columns: minmax(0, 1fr) 336px 37px; grid-template-rows: minmax(0, 1fr); }
    .main { display: flex; flex-direction: column; min-width: 0; }
    price-chart { flex: 724 1 0; }
    signal-chart { flex: 490 1 0; }
    .short { height: 24px; }
    .tall { height: 26px; }
    side-strip { box-sizing: border-box; z-index: 0; }
    menu-bar { position: relative; z-index: 1; }
    site-banner { position: absolute; z-index: 2; right: 0; bottom: 0; width: 50%; height: 109px; }
  `;
  render() {
    return html`
      <menu-bar></menu-bar>
      <div class="body">
        <div class="main">
          <period-bar></period-bar>
          <price-chart></price-chart>
          <signal-chart></signal-chart>
          <date-axis></date-axis>
          <tab-strip class="short" .tabs=${[["指标"], ["模板"], ["管理", "cyan"], ["另存为"], ["绑定到"], ["1"]]}></tab-strip>
          <tab-strip class="tall" .tabs=${[["扩展∧"], ["关联报价"], ["资金分布"], ["综合资讯", "gold"], ["行业资讯", "gold"], ["互动问答", "gold"], ["普及版功能说明"]]}></tab-strip>
        </div>
        <quote-panel></quote-panel>
        <side-strip></side-strip>
      </div>
      <index-bar></index-bar>
      <site-banner></site-banner>`;
  }
}
